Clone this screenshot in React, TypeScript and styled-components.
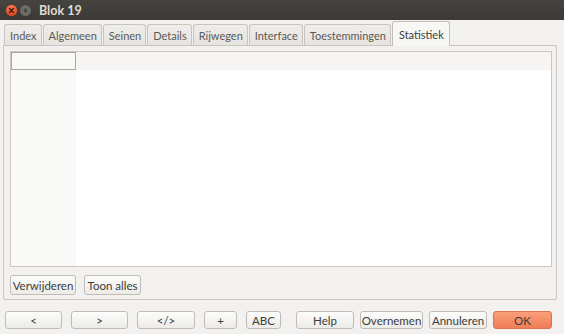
import React from 'react';
import styled, { createGlobalStyle, css } from 'styled-components';

const GlobalStyle = createGlobalStyle`
  html, body {
    margin: 0;
    padding: 0;
    background: #f2f1f0;
  }
  body {
    font-family: Lato, "Noto Sans", sans-serif;
    font-size: 11px;
    color: #3c3c3c;
  }
`;

const Window = styled.div`
  width: 564px;
  height: 334px;
  background: #f2f1f0;
  display: flex;
  flex-direction: column;
  overflow: hidden;
`;

const TitleBar = styled.div`
  height: 20px;
  background: linear-gradient(#45443f, #3b3a36);
  display: flex;
  align-items: center;
  padding-left: 5px;
  gap: 1px;
`;

const Title = styled.span`
  margin-left: 6px;
  color: #dfdbd2;
  font-weight: bold;
  font-size: 12.5px;
`;

const Body = styled.div`
  flex: 1;
  display: flex;
  flex-direction: column;
  padding: 1px 7px 0 3px;
`;

const TabStrip = styled.div`
  display: flex;
  align-items: flex-end;
  height: 24px;
  padding-left: 1px;
  gap: 1px;
  position: relative;
  z-index: 1;
`;

const Tab = styled.div<{ $active?: boolean }>`
  height: 21px;
  padding: 0 4px 0 5px;
  display: flex;
  align-items: center;
  white-space: nowrap;
  font-size: 11px;
  border: 1px solid #c9c5be;
  border-bottom: none;
  border-radius: 3px 3px 0 0;
  background: linear-gradient(#eeedeb, #e6e4e1);
  color: #5c5a55;
  box-sizing: border-box;
  ${(p) =>
    p.$active &&
    css`
      height: 25px;
      padding: 0 5px 0 6px;
      background: #f7f7f6;
      color: #3c3c3c;
      border-color: #c3bfb8;
      margin-bottom: -1px;
    `}
`;

const Panel = styled.div`
  width: 554px;
  height: 255px;
  box-sizing: border-box;
  border: 1px solid #c9c5be;
  border-radius: 0 0 2px 2px;
  background: #f2f1f0;
  padding: 5px 4px 4px 6px;
  display: flex;
  flex-direction: column;
`;

const Table = styled.div`
  height: 217px;
  border: 1px solid #cbc7c0;
  background: #ffffff;
  display: grid;
  grid-template-columns: 65px 1fr;
  grid-template-rows: 18px 1fr;
`;

const Corner = styled.div`
  border: 1px solid #aaa7a1;
  background: #f9f9f8;
`;

const ColumnHeader = styled.div`
  background: #f6f5f3;
`;

const RowHeader = styled.div`
  background: #f9f9f8;
`;

const Cells = styled.div`
  background: #ffffff;
`;

const PanelActions = styled.div`
  display: flex;
  gap: 8px;
  margin-top: 8px;
`;

const Button = styled.button<{ $w?: number; $ml?: number; $primary?: boolean; $h?: number }>`
  height: ${(p) => p.$h ?? 18}px;
  width: ${(p) => (p.$w ? `${p.$w}px` : 'auto')};
  margin-left: ${(p) => p.$ml ?? 0}px;
  padding: 0 2px;
  white-space: nowrap;
  border: 1px solid #c1bdb6;
  border-radius: 3px;
  background: linear-gradient(#fcfcfb, #ecebe8);
  color: #3c3c3c;
  font-family: Lato, "Noto Sans", sans-serif;
  font-size: 11.5px;
  display: flex;
  align-items: center;
  justify-content: center;
  box-sizing: border-box;
  ${(p) =>
    p.$primary &&
    css`
      border-color: #d8754d;
      background: linear-gradient(#fa9f7b, #f07d55);
      color: #3c3c3c;
    `}
`;

const Footer = styled.div`
  display: flex;
  align-items: center;
  height: 18px;
  margin-top: 11px;
  padding-left: 2px;
`;

const tabs = ['Index', 'Algemeen', 'Seinen', 'Details', 'Rijwegen', 'Interface', 'Toestemmingen', 'Statistiek'];

const footerButtons: { label: string; w: number; ml: number; primary?: boolean }[] = [
  { label: '<', w: 57, ml: 0 },
  { label: '>', w: 57, ml: 9 },
  { label: '</>', w: 58, ml: 9 },
  { label: '+', w: 33, ml: 9 },
  { label: 'ABC', w: 35, ml: 9 },
  { label: 'Help', w: 58, ml: 15 },
  { label: 'Overnemen', w: 63, ml: 6 },
  { label: 'Annuleren', w: 58, ml: 6 },
  { label: 'OK', w: 59, ml: 6, primary: true },
];

function CloseIcon() {
  return (
    <svg width="13" height="13" viewBox="0 0 13 13">
      <defs>
        <linearGradient id="cl" x1="0" y1="0" x2="0" y2="1">
          <stop offset="0" stopColor="#f47a54" />
          <stop offset="1" stopColor="#d9451a" />
        </linearGradient>
      </defs>
      <circle cx="6.5" cy="6.5" r="6" fill="url(#cl)" stroke="#2e2d2a" strokeWidth="0.6" />
      <path d="M4.5 4.5 L8.5 8.5 M8.5 4.5 L4.5 8.5" stroke="#3a1a0e" strokeWidth="1.3" strokeLinecap="round" />
    </svg>
  );
}

function MinimizeIcon() {
  return (
    <svg width="13" height="13" viewBox="0 0 13 13">
      <circle cx="6.5" cy="6.5" r="6" fill="#6a6964" stroke="#2e2d2a" strokeWidth="0.6" />
      <rect x="4.3" y="4" width="4.4" height="5" rx="1" fill="#4a4945" stroke="#8a8882" strokeWidth="0.6" />
    </svg>
  );
}

export default function App() {
  return (
    <Window>
      <GlobalStyle />
      <TitleBar>
        <CloseIcon />
        <MinimizeIcon />
        <Title>Blok 19</Title>
      </TitleBar>
      <Body>
        <TabStrip>
          {tabs.map((t) => (
            <Tab key={t} $active={t === 'Statistiek'}>
              {t}
            </Tab>
          ))}
        </TabStrip>
        <Panel>
          <Table>
            <Corner />
            <ColumnHeader />
            <RowHeader />
            <Cells />
          </Table>
          <PanelActions>
            <Button $h={20} $w={66}>Verwijderen</Button>
            <Button $h={20} $w={57}>Toon alles</Button>
          </PanelActions>
        </Panel>
        <Footer>
          {footerButtons.map((b) => (
            <Button key={b.label} $w={b.w} $ml={b.ml} $primary={b.primary}>
              {b.label}
            </Button>
          ))}
        </Footer>
      </Body>
    </Window>
  );
}
